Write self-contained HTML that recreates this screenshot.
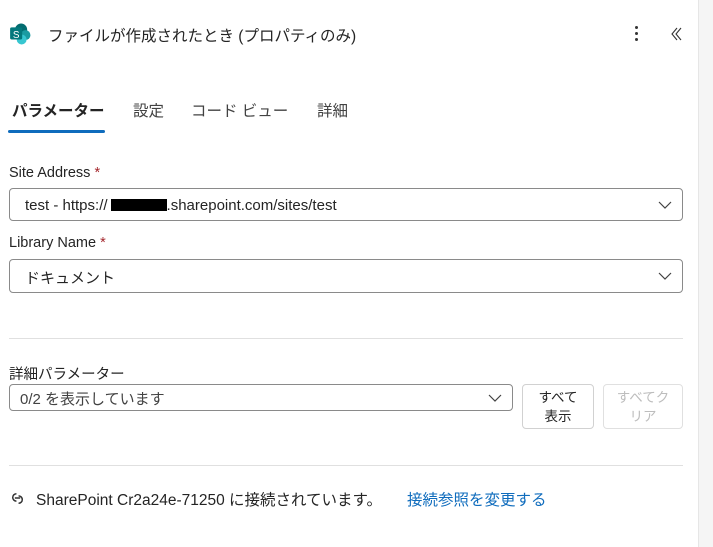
<!DOCTYPE html>
<html><head><meta charset="utf-8"><style>
body{margin:0;width:713px;height:547px;background:#fff;font-family:"Liberation Sans","Noto Sans CJK JP",sans-serif;color:#242424;position:relative;overflow:hidden}
.a{position:absolute;white-space:nowrap}
.box{position:absolute;border:1px solid #8a8a8a;border-radius:4px;box-sizing:border-box;background:#fff}
.chev{position:absolute;right:10px;top:50%;margin-top:-4px}
.lbl{font-size:14.5px}
.req{color:#a4262c}
</style></head><body>
<svg class="a" style="left:9px;top:23px" width="22" height="22" viewBox="0 0 20 20">
<circle cx="11" cy="6" r="5.5" fill="#036c70"/><circle cx="15" cy="11" r="4.5" fill="#1a9ba1"/><circle cx="11.5" cy="15" r="4.5" fill="#37c6d0"/>
<rect x="1" y="4" width="11" height="11" rx="1.5" fill="#03787c"/><text x="6.5" y="13.5" font-size="9" fill="#fff" text-anchor="middle" font-family="Liberation Sans">S</text></svg>
<div class="a" style="left:48px;top:24px;font-size:15.5px">ファイルが作成されたとき (プロパティのみ)</div>
<div class="a" style="left:635px;top:26px;width:3px;height:18px">
<div style="width:3px;height:3px;background:#333;border-radius:50%;margin-bottom:3px"></div><div style="width:3px;height:3px;background:#333;border-radius:50%;margin-bottom:3px"></div><div style="width:3px;height:3px;background:#333;border-radius:50%"></div></div>
<svg class="a" style="left:669px;top:26px" width="16" height="16" viewBox="0 0 16 16"><path d="M8 2L3 8l5 6M12 2L7 8l5 6" fill="none" stroke="#333" stroke-width="1.1"/></svg>
<div class="a" style="left:12px;top:99px;font-size:15.5px;font-weight:bold">パラメーター</div>
<div class="a" style="left:8px;top:130px;width:97px;height:3px;background:#0f6cbd;border-radius:2px"></div>
<div class="a" style="left:133px;top:99px;font-size:15.5px;color:#424242">設定</div>
<div class="a" style="left:191px;top:99px;font-size:15.5px;color:#424242">コード ビュー</div>
<div class="a" style="left:317px;top:99px;font-size:15.5px;color:#424242">詳細</div>
<div class="a lbl" style="left:9px;top:165px">Site Address <span class="req">*</span></div>
<div class="box" style="left:9px;top:188px;width:674px;height:33px"><div class="a" style="left:15px;top:8px;font-size:15px">test - https://<span style="display:inline-block;width:56px;height:12px;background:#000;vertical-align:-1px;margin-left:3px"></span>.sharepoint.com/sites/test</div><svg class="chev" width="14" height="8" viewBox="0 0 14 8"><path d="M1 1l6 6 6-6" fill="none" stroke="#424242" stroke-width="1.2"/></svg></div>
<div class="a lbl" style="left:9px;top:235px">Library Name <span class="req">*</span></div>
<div class="box" style="left:9px;top:259px;width:674px;height:34px"><div class="a" style="left:15px;top:7px;font-size:15px">ドキュメント</div><svg class="chev" width="14" height="8" viewBox="0 0 14 8"><path d="M1 1l6 6 6-6" fill="none" stroke="#424242" stroke-width="1.2"/></svg></div>
<div class="a" style="left:9px;top:338px;width:674px;height:1px;background:#e0e0e0"></div>
<div class="a lbl" style="left:9px;top:363px">詳細パラメーター</div>
<div class="box" style="left:9px;top:384px;width:504px;height:27px"><div class="a" style="left:10px;top:3px;font-size:15px;color:#424242">0/2 を表示しています</div><svg class="chev" width="14" height="8" viewBox="0 0 14 8"><path d="M1 1l6 6 6-6" fill="none" stroke="#424242" stroke-width="1.2"/></svg></div>
<div class="box" style="left:522px;top:384px;width:72px;height:45px;border-color:#d1d1d1;font-size:13.5px;text-align:center;line-height:19px;padding-top:3px">すべて<br>表示</div>
<div class="box" style="left:603px;top:384px;width:80px;height:45px;border-color:#e0e0e0;color:#bdbdbd;font-size:13.5px;text-align:center;line-height:19px;padding-top:3px">すべてク<br>リア</div>
<div class="a" style="left:9px;top:465px;width:674px;height:1px;background:#e0e0e0"></div>
<svg class="a" style="left:9px;top:490px" width="17" height="17" viewBox="0 0 16 16"><path d="M7 3.5a3.5 3.5 0 1 0 0 7M9 12.5a3.5 3.5 0 1 0 0-7M5.5 7.5h5" fill="none" stroke="#333" stroke-width="1.4"/></svg>
<div class="a" style="left:36px;top:488px;font-size:15.5px">SharePoint Cr2a24e-71250 に接続されています。</div>
<div class="a" style="left:407px;top:488px;font-size:15.5px;color:#0f6cbd">接続参照を変更する</div>
<div class="a" style="left:698px;top:0;width:15px;height:547px;background:#f5f5f5;border-left:1px solid #e6e6e6"></div>
</body></html>
